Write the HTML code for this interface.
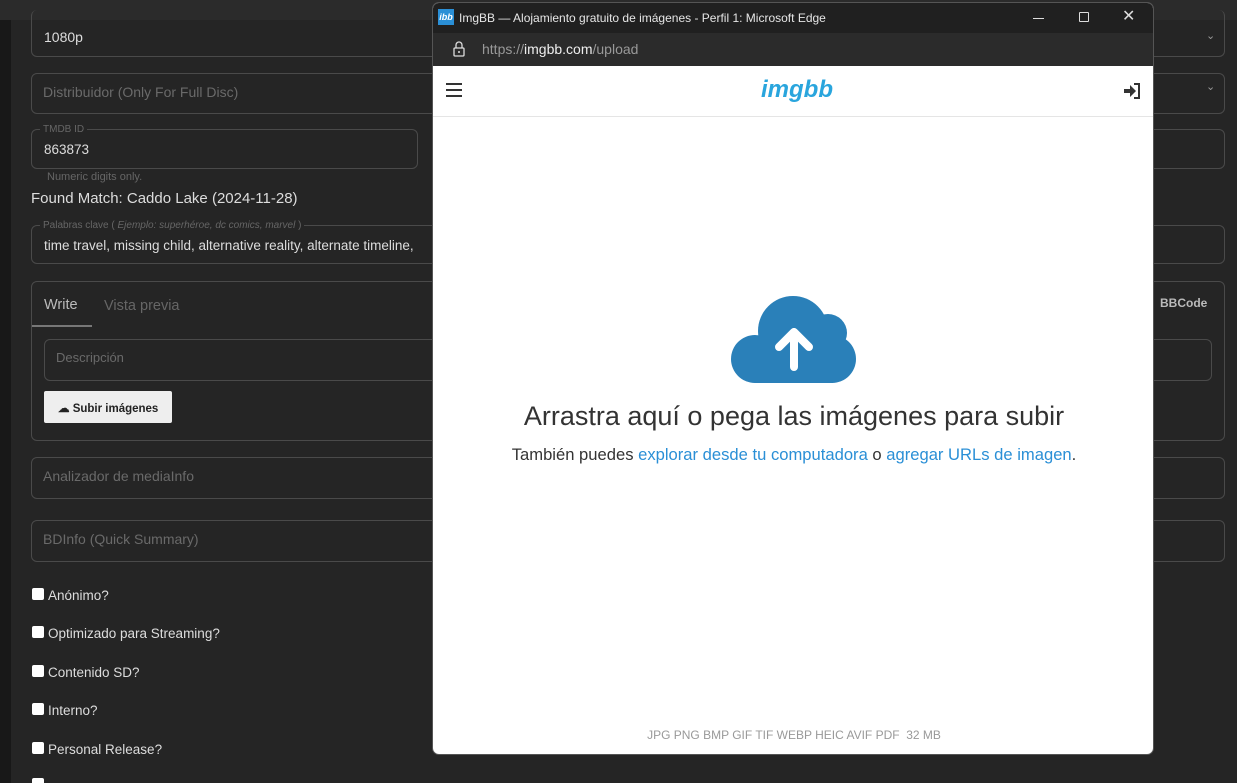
<!DOCTYPE html>
<html style="overflow:hidden"><head><meta charset="utf-8"><style>
*{box-sizing:border-box;margin:0;padding:0}
html,body{width:1237px;height:783px;overflow:hidden}
body{background:#252525;font-family:"Liberation Sans",sans-serif;position:relative;color:#ddd}
.abs{position:absolute}
.f{position:absolute;border:1px solid #4a4a4a;border-radius:6px}
.ph{position:absolute;color:#6a6a6a;font-size:14px}
.lbl{position:absolute;font-size:10px;color:#666;background:#252525;padding:0 3px}
.cb{position:absolute;left:32px;width:12px;height:12px;background:#fff;border-radius:2px}
.ct{position:absolute;left:48px;font-size:13.5px;color:#ddd}
</style></head><body>
<div class="abs" style="left:0;top:0;width:1237px;height:20px;background:#2b2b2b"></div>
<div class="abs" style="left:0;top:20px;width:11px;height:763px;background:#181818"></div>

<div class="f" style="left:31px;top:10px;width:1194px;height:47px;border-top:none"></div>
<div class="abs" style="left:44px;top:29px;font-size:14px;color:#ddd">1080p</div>
<div class="abs" style="left:1206px;top:29px;font-size:11px;color:#999">⌄</div>

<div class="f" style="left:31px;top:73px;width:1194px;height:41px"></div>
<div class="ph" style="left:43px;top:84px">Distribuidor (Only For Full Disc)</div>
<div class="abs" style="left:1206px;top:80px;font-size:11px;color:#999">⌄</div>

<div class="f" style="left:31px;top:129px;width:387px;height:40px"></div>
<div class="lbl" style="left:40px;top:124px">TMDB ID</div>
<div class="abs" style="left:44px;top:142px;font-size:13.5px;color:#ddd">863873</div>
<div class="f" style="left:1100px;top:129px;width:125px;height:40px"></div>
<div class="abs" style="left:47px;top:171px;font-size:11px;color:#666">Numeric digits only.</div>
<div class="abs" style="left:31px;top:190px;font-size:15px;color:#ddd">Found Match: Caddo Lake (2024-11-28)</div>

<div class="f" style="left:31px;top:225px;width:1194px;height:39px"></div>
<div class="lbl" style="left:40px;top:220px">Palabras clave ( <i>Ejemplo: superhéroe, dc comics, marvel</i> )</div>
<div class="abs" style="left:44px;top:238px;font-size:13.5px;color:#ddd;white-space:nowrap">time travel, missing child, alternative reality, alternate timeline,</div>

<div class="f" style="left:31px;top:281px;width:1194px;height:160px"></div>
<div class="abs" style="left:44px;top:297px;font-size:14.5px;color:#bbb">Write</div>
<div class="abs" style="left:104px;top:298px;font-size:14.5px;color:#666">Vista previa</div>
<div class="abs" style="left:32px;top:325px;width:60px;height:2px;background:#777"></div>
<div class="abs" style="left:1160px;top:296px;font-size:12px;font-weight:bold;color:#bbb">BBCode</div>
<div class="f" style="left:44px;top:339px;width:1168px;height:42px"></div>
<div class="ph" style="left:56px;top:350px;font-size:13px">Descripción</div>
<div class="abs" style="left:44px;top:391px;width:128px;height:32px;background:#eee;border-radius:2px;font-size:11.5px;font-weight:bold;color:#222;padding:10px 0 0 14px">☁ Subir imágenes</div>

<div class="f" style="left:31px;top:457px;width:1194px;height:42px"></div>
<div class="ph" style="left:43px;top:468px">Analizador de mediaInfo</div>
<div class="f" style="left:31px;top:520px;width:1194px;height:42px"></div>
<div class="ph" style="left:43px;top:531px">BDInfo (Quick Summary)</div>

<div class="cb" style="top:588px"></div><div class="ct" style="top:588px">Anónimo?</div>
<div class="cb" style="top:626px"></div><div class="ct" style="top:626px">Optimizado para Streaming?</div>
<div class="cb" style="top:665px"></div><div class="ct" style="top:665px">Contenido SD?</div>
<div class="cb" style="top:703px"></div><div class="ct" style="top:703px">Interno?</div>
<div class="cb" style="top:742px"></div><div class="ct" style="top:742px">Personal Release?</div>
<div class="cb" style="top:778px;height:5px;border-radius:2px 2px 0 0"></div>

<!-- popup -->
<div class="abs" style="left:432px;top:2px;width:722px;height:753px;border-radius:7px;overflow:hidden;background:#fff;border:1px solid #555">
 <div class="abs" style="left:0;top:0;width:722px;height:30px;background:#202020"></div>
 <div class="abs" style="left:5px;top:6px;width:16px;height:16px;background:#2a8fd6;color:#fff;font-size:9px;font-style:italic;font-weight:bold;text-align:center;line-height:16px">ibb</div>
 <div class="abs" style="left:26px;top:8px;font-size:12px;color:#e6e6e6">ImgBB — Alojamiento gratuito de imágenes - Perfil 1: Microsoft Edge</div>
 <div class="abs" style="left:600px;top:15px;width:11px;height:1px;background:#ddd"></div>
 <div class="abs" style="left:646px;top:9px;width:10px;height:10px;border:1px solid #ddd;border-radius:1px"></div>
 <div class="abs" style="left:689px;top:3px;font-size:16px;color:#ddd">✕</div>
 <div class="abs" style="left:0;top:30px;width:722px;height:33px;background:#2b2b2b"></div>
 <svg class="abs" style="left:19px;top:37px" width="14" height="18" viewBox="0 0 14 18"><path d="M4 8V5a3 3 0 0 1 6 0v3" fill="none" stroke="#ddd" stroke-width="1.3"/><rect x="2" y="8" width="10" height="8" rx="1" fill="none" stroke="#ddd" stroke-width="1.3"/><circle cx="7" cy="12" r="1" fill="#ddd"/></svg>
 <div class="abs" style="left:49px;top:38px;font-size:14px;color:#999">https://<span style="color:#eee">imgbb.com</span>/upload</div>
 <div class="abs" style="left:0;top:113px;width:722px;height:1px;background:#e5e5e5"></div>
 <div class="abs" style="left:13px;top:80px;width:16px;height:2px;background:#333;box-shadow:0 6px 0 #333,0 12px 0 #333"></div>
 <div class="abs" style="left:328px;top:73px;font-size:24px;font-weight:bold;font-style:italic;color:#29a5dd">imgbb</div>
 <svg class="abs" style="left:689px;top:79px" width="20" height="18" viewBox="0 0 20 18"><path d="M12 2h5v14h-5" fill="none" stroke="#333" stroke-width="2"/><path d="M2 7h6V3l6 6-6 6v-4H2z" fill="#333"/></svg>
 <svg class="abs" style="left:298px;top:291px" width="126" height="89" viewBox="0 0 126 89" fill="#2a80b9">
  <circle cx="24" cy="65" r="24"/><circle cx="62" cy="37" r="35"/><circle cx="97" cy="39" r="19"/><circle cx="101" cy="65" r="24"/><rect x="24" y="45" width="78" height="44"/>
  <path d="M63 73V38M48 53l15-15 15 15" fill="none" stroke="#fff" stroke-width="8" stroke-linecap="round" stroke-linejoin="round"/></svg>
 <div class="abs" style="left:0;top:398px;width:722px;text-align:center;font-size:27px;color:#333">Arrastra aquí o pega las imágenes para subir</div>
 <div class="abs" style="left:0;top:442px;width:722px;text-align:center;font-size:16.6px;color:#333">También puedes <span style="color:#2a8fd6">explorar desde tu computadora</span> o <span style="color:#2a8fd6">agregar URLs de imagen</span>.</div>
 <div class="abs" style="left:0;top:725px;width:722px;text-align:center;font-size:12px;color:#999">JPG PNG BMP GIF TIF WEBP HEIC AVIF PDF &nbsp;32 MB</div>
</div>
</body></html>
